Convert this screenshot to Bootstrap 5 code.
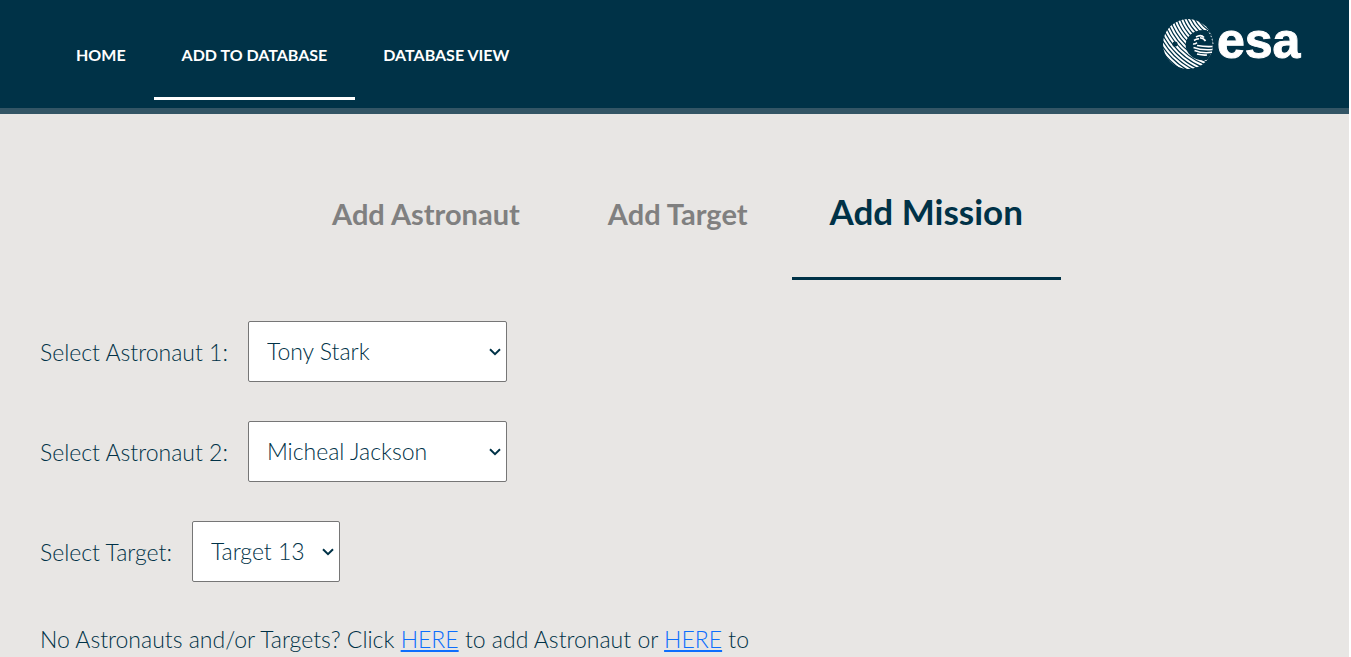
<!DOCTYPE html>
<html lang="en">
<head>
<meta charset="utf-8">
<meta name="viewport" content="width=device-width, initial-scale=1">
<title>ESA - Add to database</title>
<link href="https://cdn.jsdelivr.net/npm/bootstrap@5.3.0/dist/css/bootstrap.min.css" rel="stylesheet">
<style>
:root { --esa-blue: #003247; --esa-line: #335565; --esa-grey: #e8e6e4; }
html { background: #fff; }
body { background: var(--esa-grey); border-right: 2px solid #fff; color: var(--esa-blue); font-family: Lato, "Open Sans", sans-serif; font-size: 23px; font-weight: 300; line-height: 34px; }
.site-header { background: var(--esa-blue); border-bottom: 6px solid var(--esa-line); padding: 10px 46px 8px 48px; }
.site-header .nav-link { color: #fff; font-size: 16px; font-weight: 700; line-height: 24px; padding: 33px 28px 30px; border-bottom: 3px solid transparent; }
.site-header .nav-link.active { border-color: #fff; }
.logo { line-height: 0; padding-top: 7px; }
.logo-word { font: 700 50px "Liberation Sans", Arial, sans-serif; fill: #fff; stroke: #fff; stroke-width: 1px; }
.section-tabs { padding-top: 33px; }
.section-tabs .nav-link { color: #808080; font-size: 29px; font-weight: 700; line-height: 40px; padding: 40px 44px; }
.section-tabs .nav-link.active { color: var(--esa-blue); font-size: 35px; padding: 44px 38px 46px; border-bottom: 3px solid var(--esa-blue); }
.mission-form { padding: 41px 40px; }
.field-line { gap: 20px; margin-bottom: 39px; }
.picker { appearance: none; color: var(--esa-blue); background: #fff url("data:image/svg+xml,%3Csvg xmlns='http://www.w3.org/2000/svg' width='12' height='8'%3E%3Cpath d='M1 1.2l5 5 5-5' fill='none' stroke='%23003247' stroke-width='2'/%3E%3C/svg%3E") no-repeat right 5px center; border: 1px solid #767676; border-radius: 2px; height: 61px; padding: 0 0 2px 18px; font-weight: 300; }
.picker-wide { width: 259px; }
.picker-short { width: 148px; }
.hint { padding-top: 1px; }
.hint a { color: #0d6efd; }
</style>
</head>
<body class="min-vh-100">
<header class="site-header d-flex justify-content-between align-items-start">
  <nav class="nav" aria-label="Main">
    <a class="nav-link" href="#">HOME</a>
    <a class="nav-link active" href="#" aria-current="page">ADD TO DATABASE</a>
    <a class="nav-link" href="#">DATABASE VIEW</a>
  </nav>
  <a class="logo" href="#" aria-label="ESA home">
    <svg width="142" height="54" viewBox="0 0 142 54" overflow="visible">
      <defs>
        <clipPath id="globe"><circle cx="27" cy="27" r="25"/></clipPath>
      </defs>
      <g clip-path="url(#globe)">
        <g fill="none" stroke="#fff" stroke-width="2">
          <circle cx="68" cy="-16" r="31"/><circle cx="68" cy="-16" r="34.2"/><circle cx="68" cy="-16" r="37.4"/>
          <circle cx="68" cy="-16" r="40.6"/><circle cx="68" cy="-16" r="43.8"/><circle cx="68" cy="-16" r="47"/>
          <circle cx="68" cy="-16" r="50.2"/><circle cx="68" cy="-16" r="53.4"/><circle cx="68" cy="-16" r="56.6"/>
          <circle cx="68" cy="-16" r="59.8"/><circle cx="68" cy="-16" r="63"/><circle cx="68" cy="-16" r="66.2"/>
          <circle cx="68" cy="-16" r="69.4"/><circle cx="68" cy="-16" r="72.6"/><circle cx="68" cy="-16" r="75.8"/>
          <circle cx="68" cy="-16" r="79"/><circle cx="68" cy="-16" r="82.2"/><circle cx="68" cy="-16" r="85.4"/>
        </g>
        <path fill="#003247" d="M54 14.500C44 12 35 12 29 18s-6 15 1 21c6 5 12 5 24 3z"/>
        <circle cx="14" cy="27" r="2.6" fill="#003247"/>
      </g>
      <g fill="none" stroke="#fff" stroke-width="1.6">
        <path d="M35 20q5-3 8 .5M33 23.500q3-2 5-1.500M39 20.800q4 .5 5.500 3.200M32 27q2 .3 4-1.300"/>
        <path d="M36 28.500q8 1.500 15.500 1M32.500 30.500q8 3 19 2M33.500 33.500q8 3.200 17.500 1.800M36 37q6 1.500 10 1"/>
      </g>
      <path d="M46 13q5 5 6 14" stroke="#fff" stroke-width="1" stroke-dasharray="1.5 2" fill="none"/>
      <text class="logo-word" x="56" y="41">esa</text>
    </svg>
  </a>
</header>
<main>
  <nav class="section-tabs nav justify-content-center align-items-center" aria-label="Forms">
    <a class="nav-link" href="#">Add Astronaut</a>
    <a class="nav-link" href="#">Add Target</a>
    <a class="nav-link active" href="#" aria-current="true">Add Mission</a>
  </nav>
  <form class="mission-form">
    <div class="field-line d-flex align-items-center">
      <label for="astro1">Select Astronaut 1:</label>
      <select class="picker picker-wide" id="astro1"><option>Tony Stark</option></select>
    </div>
    <div class="field-line d-flex align-items-center">
      <label for="astro2">Select Astronaut 2:</label>
      <select class="picker picker-wide" id="astro2"><option>Micheal Jackson</option></select>
    </div>
    <div class="field-line d-flex align-items-center">
      <label for="target">Select Target:</label>
      <select class="picker picker-short" id="target"><option>Target 13</option></select>
    </div>
    <p class="hint mb-0">No Astronauts and/or Targets? Click <a href="#">HERE</a> to add Astronaut or <a href="#">HERE</a> to</p>
  </form>
</main>
<script src="https://cdn.jsdelivr.net/npm/bootstrap@5.3.0/dist/js/bootstrap.bundle.min.js"></script>
</body>
</html>
